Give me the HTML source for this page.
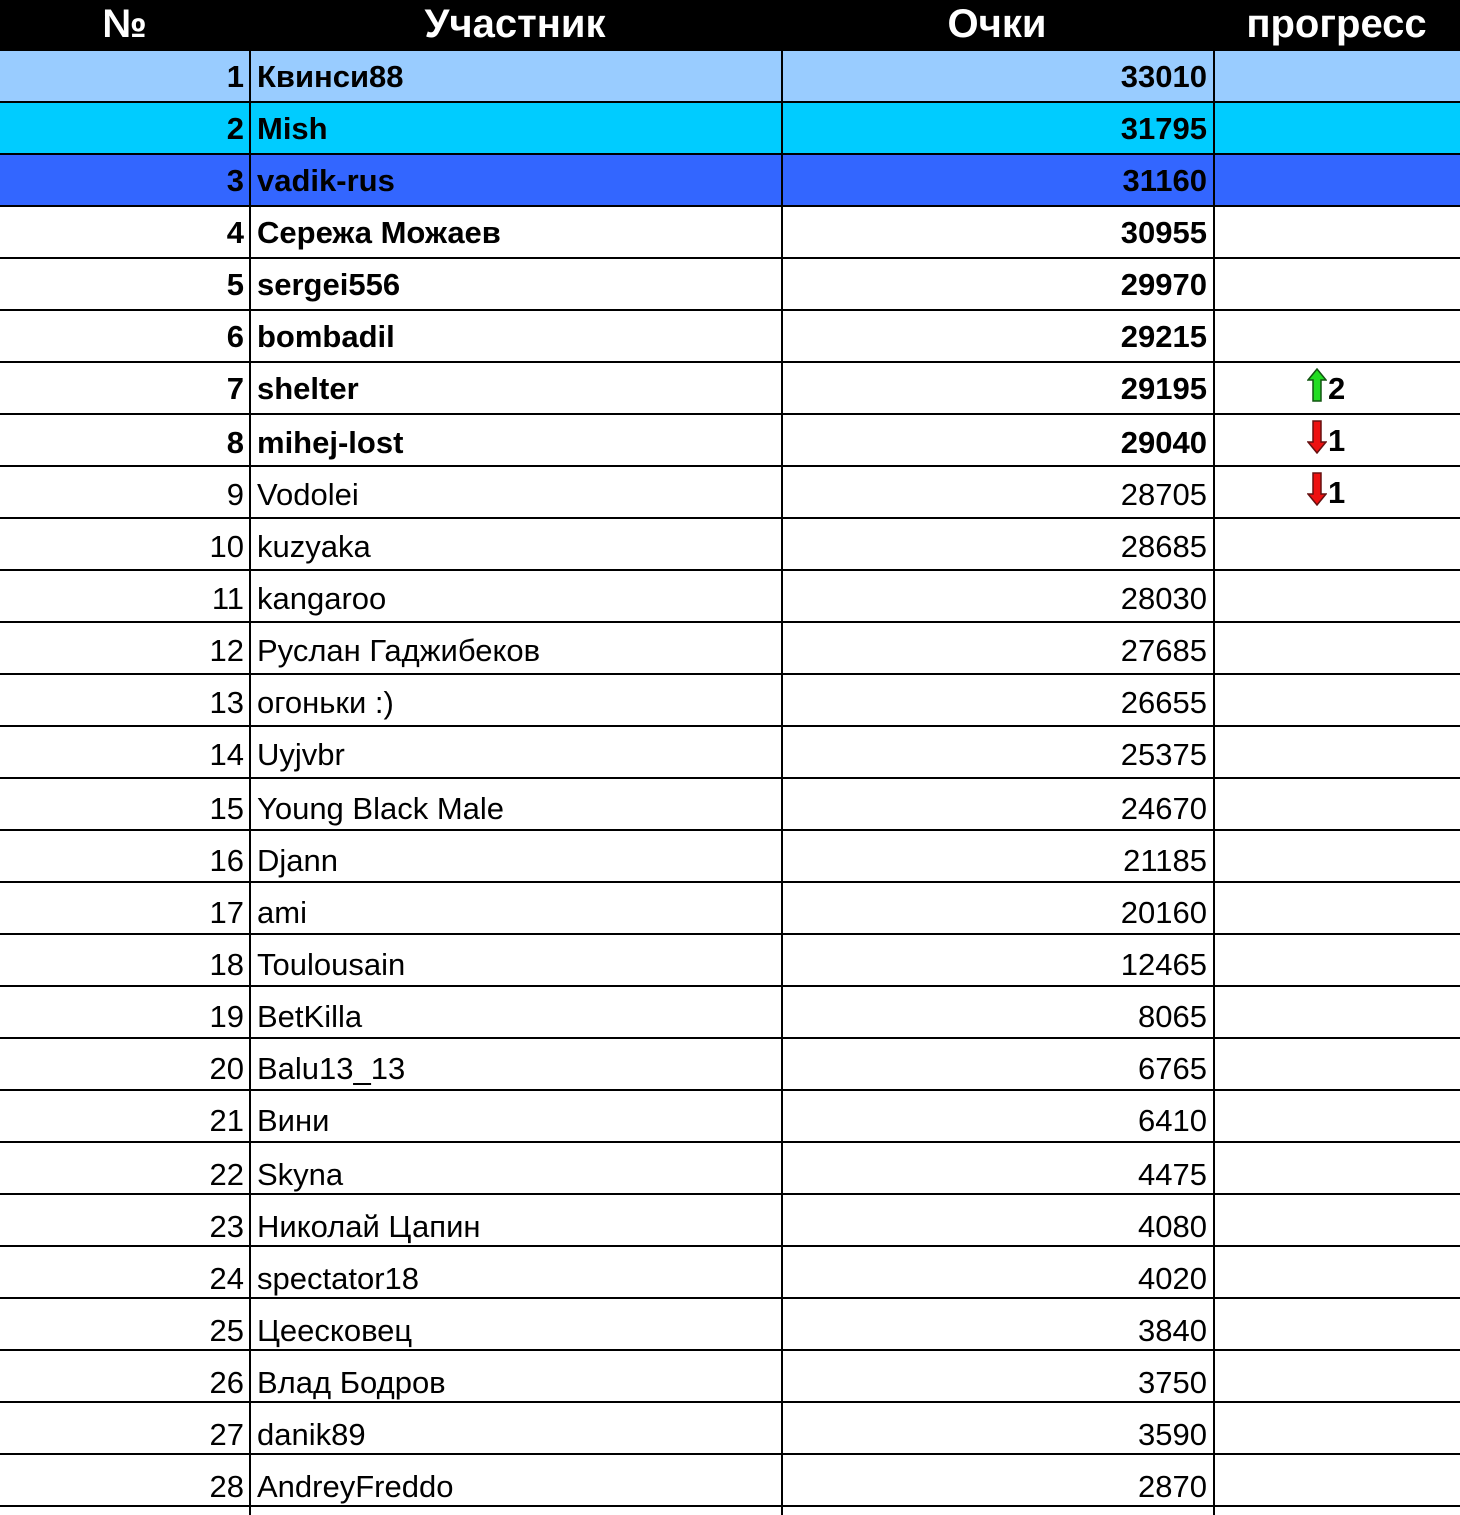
<!DOCTYPE html>
<html><head><meta charset="utf-8">
<style>
html,body{margin:0;padding:0;background:#fff;}
body{width:1460px;height:1515px;overflow:hidden;position:relative;font-family:"Liberation Sans","Noto Sans CJK SC",sans-serif;color:#000;}
.hdr{position:absolute;left:0;top:0;width:1460px;height:51px;background:#000;color:#fff;font-weight:bold;font-size:40px;}
.hdr div{position:absolute;top:0;height:51px;line-height:48px;text-align:center;}
.row{position:absolute;left:0;width:1460px;height:52px;border-bottom:2px solid #000;box-sizing:border-box;font-size:31px;}
.row div{position:absolute;top:0;height:50px;line-height:52px;box-sizing:border-box;}
.row:nth-child(n+9) div{padding-top:2px;}
.row:nth-child(n+16) div{padding-top:4px;}
.row:nth-child(n+23) div{padding-top:6px;}
.c1{left:0;width:249px;text-align:right;padding-right:5px;}
.c2{left:249px;width:532px;border-left:2px solid #000;padding-left:6px;}
.c3{left:781px;width:432px;border-left:2px solid #000;text-align:right;padding-right:6px;}
.c4{left:1213px;width:247px;border-left:2px solid #000;}
.b{font-weight:bold;}
.pr{position:absolute;left:92px;top:0;font-size:31px;line-height:52px;}
.pr svg{vertical-align:-3px;margin-right:1px;}
</style></head><body>
<div class="hdr">
<div style="left:0;width:249px">№</div>
<div style="left:249px;width:532px">Участник</div>
<div style="left:781px;width:432px">Очки</div>
<div style="left:1213px;width:247px">прогресс</div>
</div>

<div class="row b" style="top:51px;background:#99ccff"><div class="c1">1</div><div class="c2">Квинси88</div><div class="c3">33010</div><div class="c4"></div></div>
<div class="row b" style="top:103px;background:#00ccff"><div class="c1">2</div><div class="c2">Mish</div><div class="c3">31795</div><div class="c4"></div></div>
<div class="row b" style="top:155px;background:#3366ff"><div class="c1">3</div><div class="c2">vadik-rus</div><div class="c3">31160</div><div class="c4"></div></div>
<div class="row b" style="top:207px"><div class="c1">4</div><div class="c2">Сережа Можаев</div><div class="c3">30955</div><div class="c4"></div></div>
<div class="row b" style="top:259px"><div class="c1">5</div><div class="c2">sergei556</div><div class="c3">29970</div><div class="c4"></div></div>
<div class="row b" style="top:311px"><div class="c1">6</div><div class="c2">bombadil</div><div class="c3">29215</div><div class="c4"></div></div>
<div class="row b" style="top:363px"><div class="c1">7</div><div class="c2">shelter</div><div class="c3">29195</div><div class="c4"><span class="pr"><svg width="20" height="34" viewBox="0 0 20 34"><path d="M10 1 L19 12 L14 12 L14 33 L6 33 L6 12 L1 12 Z" fill="#22dd22" stroke="#115511" stroke-width="1.5"/></svg>2</span></div></div>
<div class="row b" style="top:415px"><div class="c1">8</div><div class="c2">mihej-lost</div><div class="c3">29040</div><div class="c4"><span class="pr"><svg width="20" height="34" viewBox="0 0 20 34"><path d="M6 1 L14 1 L14 22 L19 22 L10 33 L1 22 L6 22 Z" fill="#ee1111" stroke="#661111" stroke-width="1.5"/></svg>1</span></div></div>
<div class="row" style="top:467px"><div class="c1">9</div><div class="c2">Vodolei</div><div class="c3">28705</div><div class="c4"><span class="pr b"><svg width="20" height="34" viewBox="0 0 20 34"><path d="M6 1 L14 1 L14 22 L19 22 L10 33 L1 22 L6 22 Z" fill="#ee1111" stroke="#661111" stroke-width="1.5"/></svg>1</span></div></div>
<div class="row" style="top:519px"><div class="c1">10</div><div class="c2">kuzyaka</div><div class="c3">28685</div><div class="c4"></div></div>
<div class="row" style="top:571px"><div class="c1">11</div><div class="c2">kangaroo</div><div class="c3">28030</div><div class="c4"></div></div>
<div class="row" style="top:623px"><div class="c1">12</div><div class="c2">Руслан Гаджибеков</div><div class="c3">27685</div><div class="c4"></div></div>
<div class="row" style="top:675px"><div class="c1">13</div><div class="c2">огоньки :)</div><div class="c3">26655</div><div class="c4"></div></div>
<div class="row" style="top:727px"><div class="c1">14</div><div class="c2">Uyjvbr</div><div class="c3">25375</div><div class="c4"></div></div>
<div class="row" style="top:779px"><div class="c1">15</div><div class="c2">Young Black Male</div><div class="c3">24670</div><div class="c4"></div></div>
<div class="row" style="top:831px"><div class="c1">16</div><div class="c2">Djann</div><div class="c3">21185</div><div class="c4"></div></div>
<div class="row" style="top:883px"><div class="c1">17</div><div class="c2">ami</div><div class="c3">20160</div><div class="c4"></div></div>
<div class="row" style="top:935px"><div class="c1">18</div><div class="c2">Toulousain</div><div class="c3">12465</div><div class="c4"></div></div>
<div class="row" style="top:987px"><div class="c1">19</div><div class="c2">BetKilla</div><div class="c3">8065</div><div class="c4"></div></div>
<div class="row" style="top:1039px"><div class="c1">20</div><div class="c2">Balu13_13</div><div class="c3">6765</div><div class="c4"></div></div>
<div class="row" style="top:1091px"><div class="c1">21</div><div class="c2">Вини</div><div class="c3">6410</div><div class="c4"></div></div>
<div class="row" style="top:1143px"><div class="c1">22</div><div class="c2">Skyna</div><div class="c3">4475</div><div class="c4"></div></div>
<div class="row" style="top:1195px"><div class="c1">23</div><div class="c2">Николай Цапин</div><div class="c3">4080</div><div class="c4"></div></div>
<div class="row" style="top:1247px"><div class="c1">24</div><div class="c2">spectator18</div><div class="c3">4020</div><div class="c4"></div></div>
<div class="row" style="top:1299px"><div class="c1">25</div><div class="c2">Цеесковец</div><div class="c3">3840</div><div class="c4"></div></div>
<div class="row" style="top:1351px"><div class="c1">26</div><div class="c2">Влад Бодров</div><div class="c3">3750</div><div class="c4"></div></div>
<div class="row" style="top:1403px"><div class="c1">27</div><div class="c2">danik89</div><div class="c3">3590</div><div class="c4"></div></div>
<div class="row" style="top:1455px"><div class="c1">28</div><div class="c2">AndreyFreddo</div><div class="c3">2870</div><div class="c4"></div></div>
<div class="row" style="top:1507px;height:8px;border:none"><div class="c1" style="height:8px"></div><div class="c2" style="height:8px"></div><div class="c3" style="height:8px"></div><div class="c4" style="height:8px"></div></div>
</body></html>
